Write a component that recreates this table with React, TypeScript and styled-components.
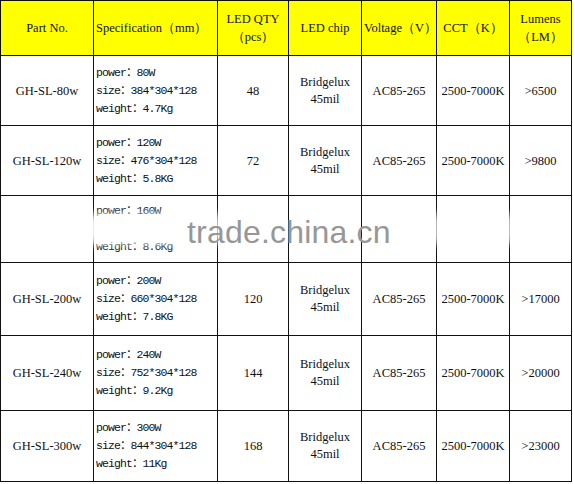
import React from "react";
import styled, { createGlobalStyle } from "styled-components";

const Global = createGlobalStyle`
  html, body { margin: 0; padding: 0; background: #fff; }
  body { font-family: "Liberation Serif", "Times New Roman", serif; color: #111; }
`;

const Wrap = styled.div`
  position: relative;
  width: 573px;
  height: 484px;
  overflow: hidden;
`;

const Grid = styled.div`
  display: grid;
  grid-template-columns: 93px 124px 71px 73px 75px 73px 62px;
  grid-template-rows: 55px 70px 70px 67px 73px 75px 71px;
  border-left: 1.5px solid #111;
  border-top: 1.5px solid #111;
  width: max-content;
`;

const Cell = styled.div<{ $head?: boolean; $align?: "left" | "center" }>`
  border-right: 1.5px solid #111;
  border-bottom: 1.5px solid #111;
  background: ${(p) => (p.$head ? "#ffff00" : "#fff")};
  display: flex;
  flex-direction: column;
  justify-content: center;
  align-items: ${(p) => (p.$align === "left" ? "flex-start" : "center")};
  text-align: ${(p) => (p.$align === "left" ? "left" : "center")};
  padding: ${(p) => (p.$align === "left" ? "0 0 0 2px" : "0")};
  font-size: 12.5px;
  line-height: 18px;
  white-space: nowrap;
  overflow: hidden;
`;

const Spec = styled.div`
  font-family: "Liberation Mono", "Noto Sans CJK SC", monospace;
  font-size: 11.5px;
  letter-spacing: -0.9px;
  line-height: 18px;
  color: #111;
`;

const SpecLine = styled.div`
  min-height: 18px;
`;

const Chip = styled.div`
  line-height: 17px;
`;

const Watermark = styled.div`
  position: absolute;
  left: 187px;
  top: 216px;
  font-family: "Liberation Sans", Arial, sans-serif;
  font-size: 32px;
  line-height: 32px;
  color: #979797;
  letter-spacing: 0.2px;
`;

const Smudge = styled.div<{ $w: number }>`
  position: absolute;
  height: 30px;
  width: ${(p) => p.$w}px;
  background: rgba(255, 255, 255, 0.95);
  filter: blur(4px);
`;

type Row = {
  part: string;
  power: string;
  size: string;
  weight: string;
  qty: string;
  lumens: string;
  hidden?: boolean;
};

const rows: Row[] = [
  { part: "GH-SL-80w", power: "80W", size: "384*304*128", weight: "4.7Kg", qty: "48", lumens: ">6500" },
  { part: "GH-SL-120w", power: "120W", size: "476*304*128", weight: "5.8KG", qty: "72", lumens: ">9800" },
  { part: "", power: "160W", size: "", weight: "8.6Kg", qty: "", lumens: "", hidden: true },
  { part: "GH-SL-200w", power: "200W", size: "660*304*128", weight: "7.8KG", qty: "120", lumens: ">17000" },
  { part: "GH-SL-240w", power: "240W", size: "752*304*128", weight: "9.2Kg", qty: "144", lumens: ">20000" },
  { part: "GH-SL-300w", power: "300W", size: "844*304*128", weight: "11Kg", qty: "168", lumens: ">23000" },
];

export default function App() {
  return (
    <Wrap>
      <Global />
      <Grid>
        <Cell $head>Part No.</Cell>
        <Cell $head $align="left">Specification（mm）</Cell>
        <Cell $head>
          <div>LED QTY</div>
          <div>（pcs）</div>
        </Cell>
        <Cell $head>LED chip</Cell>
        <Cell $head $align="left">Voltage（V）</Cell>
        <Cell $head>CCT（K）</Cell>
        <Cell $head>
          <div>Lumens</div>
          <div>（LM）</div>
        </Cell>
        {rows.map((r, i) => (
          <React.Fragment key={i}>
            <Cell>{r.part}</Cell>
            <Cell $align="left">
              <Spec>
                <SpecLine>power：{r.power}</SpecLine>
                <SpecLine>{r.size ? `size：${r.size}` : ""}</SpecLine>
                <SpecLine>weight：{r.weight}</SpecLine>
              </Spec>
            </Cell>
            <Cell>{r.qty}</Cell>
            <Cell>
              {!r.hidden && (
                <Chip>
                  <div>Bridgelux</div>
                  <div>45mil</div>
                </Chip>
              )}
            </Cell>
            <Cell>{r.hidden ? "" : "AC85-265"}</Cell>
            <Cell>{r.hidden ? "" : "2500-7000K"}</Cell>
            <Cell>{r.lumens}</Cell>
          </React.Fragment>
        ))}
      </Grid>
      <Smudge $w={102} style={{ left: 86, top: 214 }} />
      <Smudge $w={10} style={{ left: 213, top: 214 }} />
      <Smudge $w={10} style={{ left: 433, top: 214 }} />
      <Smudge $w={10} style={{ left: 505, top: 214 }} />
      <Watermark>trade.china.cn</Watermark>
    </Wrap>
  );
}
